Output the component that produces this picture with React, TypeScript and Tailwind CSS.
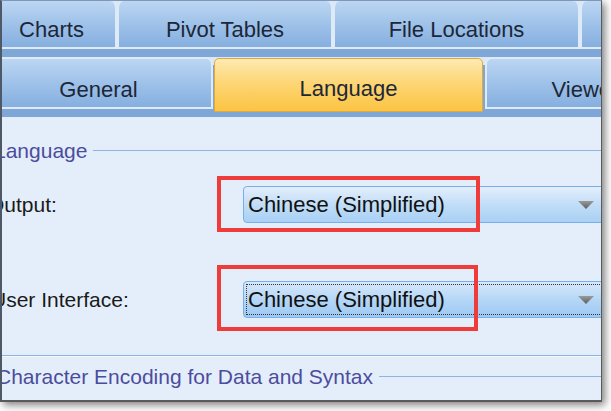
import React from "react";

const font = { fontFamily: '"Liberation Sans", Arial, sans-serif' };

function TopTab({ label, className }: { label: string; className: string }) {
  return (
    <div
      className={`h-full shrink-0 flex items-center justify-center pt-[10px] rounded-t-[7px] border-2 border-t-0 border-[#dfeaf7] bg-[linear-gradient(#bcd6f2,#9cc0e8_55%,#86afdf)] text-[22px] text-[#1c2738] ${className}`}
    >
      {label}
    </div>
  );
}

function Dropdown({ focused }: { focused?: boolean }) {
  return (
    <div
      className={`h-[37px] w-[362px] shrink-0 rounded-l-[4px] border border-[#78aee9] p-[2px] ${
        focused
          ? "bg-[linear-gradient(#d7e8fb,#b2d5f6_55%,#9ec9f3)]"
          : "bg-[linear-gradient(#e3eefb,#bedcf7_55%,#a9d0f5)]"
      }`}
    >
      <div
        className={`h-full flex items-center justify-between pl-px pr-[6px] border border-dotted ${
          focused ? "border-[#333]" : "border-transparent"
        }`}
      >
        <span className="text-[22px] text-[#111]">Chinese (Simplified)</span>
        <svg width="16" height="8" viewBox="0 0 16 8" className="mr-px">
          <defs>
            <linearGradient id={focused ? "ag2" : "ag1"} x1="0" y1="0" x2="0" y2="1">
              <stop offset="0" stopColor="#9a9a9a" />
              <stop offset="1" stopColor="#5e5e5e" />
            </linearGradient>
          </defs>
          <path d="M0 0h16L8 8z" fill={`url(#${focused ? "ag2" : "ag1"})`} />
        </svg>
      </div>
    </div>
  );
}

function GroupLabel({ label, shift }: { label: string; shift: string }) {
  return (
    <div className="flex items-center h-[24px]">
      <span className={`text-[21px] text-[#4c4c9e] whitespace-nowrap ${shift}`}>{label}</span>
      <div className="flex-1 ml-[6px] h-px bg-[#90b4e2] mt-[-2px]" />
    </div>
  );
}

export default function App() {
  return (
    <div className="w-[611px] h-[411px] bg-white overflow-hidden" style={font}>
      <div className="relative w-[602px] h-[402px] flex flex-col overflow-hidden border-l-2 border-r border-b-2 border-t border-l-[#4f5866] border-r-[#5a5a5a] border-b-[#5a5a5a] border-t-[#7d98bd] bg-[#e4eefa] shadow-[3px_3px_8px_rgba(0,0,0,0.5)]">
        {/* row 1 tabs */}
        <div className="h-[48px] flex bg-[#dbe7f5] -ml-[16px] shrink-0">
          <TopTab label="Charts" className="w-[131px]" />
          <TopTab label="Pivot Tables" className="w-[216px]" />
          <TopTab label="File Locations" className="w-[247px]" />
          <TopTab label="" className="w-[100px]" />
        </div>

        {/* row 2 tabs */}
        <div className="h-[68px] flex items-start pt-[8px] bg-[linear-gradient(#7ea6d6_0,#7ea6d6_8px,#dbe7f5_8px,#dbe7f5_16px,#7ea6d6_16px)] -ml-[18px] shrink-0">
          <div className="w-[229px] h-[52px] shrink-0 flex items-center justify-center rounded-t-[7px] border-2 border-[#dfeaf7] bg-[linear-gradient(#bcd6f2,#9cc0e8_55%,#86afdf)] text-[22px] text-[#1c2738] pt-[12px]">
            General
          </div>
          <div className="w-px shrink-0" />
          <div className="w-[269px] h-[54px] shrink-0 flex items-center justify-center rounded-t-[5px] border border-[#e3a83d] bg-[linear-gradient(#feeab2,#fdd676_45%,#fbc443)] text-[22px] text-[#1c2738] mt-px pt-[6px]">
            Language
          </div>
          <div className="w-[2px] shrink-0" />
          <div className="w-[200px] h-[52px] shrink-0 flex items-center justify-center rounded-t-[7px] border-2 border-[#dfeaf7] bg-[linear-gradient(#bcd6f2,#9cc0e8_55%,#86afdf)] text-[22px] text-[#1c2738] pt-[12px]">
            Viewer
          </div>
        </div>

        {/* panel */}
        <div className="flex-1 flex flex-col pt-[22px]">
          <GroupLabel label="Language" shift="-ml-[8px]" />

          <div className="flex items-center mt-[23px] h-[37px]">
            <span className="text-[21px] text-[#1a1a1a] -ml-[14px] w-[255px] shrink-0">Output:</span>
            <Dropdown />
          </div>

          <div className="flex items-center mt-[58px] h-[37px]">
            <span className="text-[21px] text-[#1a1a1a] -ml-[11px] w-[252px] shrink-0">User Interface:</span>
            <Dropdown focused />
          </div>

          <div className="mt-[37px] h-px bg-[#8fb3e1] shrink-0" />
          <div className="h-px bg-[#f4f8fd] shrink-0" />

          <div className="mt-[8px]">
            <GroupLabel label="Character Encoding for Data and Syntax" shift="-ml-[6px]" />
          </div>
        </div>

        {/* red annotation boxes */}
        <div className="absolute left-[215px] top-[175px] w-[263px] h-[56px] border-[4px] border-[#f03b3b]" />
        <div className="absolute left-[215px] top-[264px] w-[261px] h-[66px] border-[4px] border-[#f03b3b]" />
      </div>
    </div>
  );
}
